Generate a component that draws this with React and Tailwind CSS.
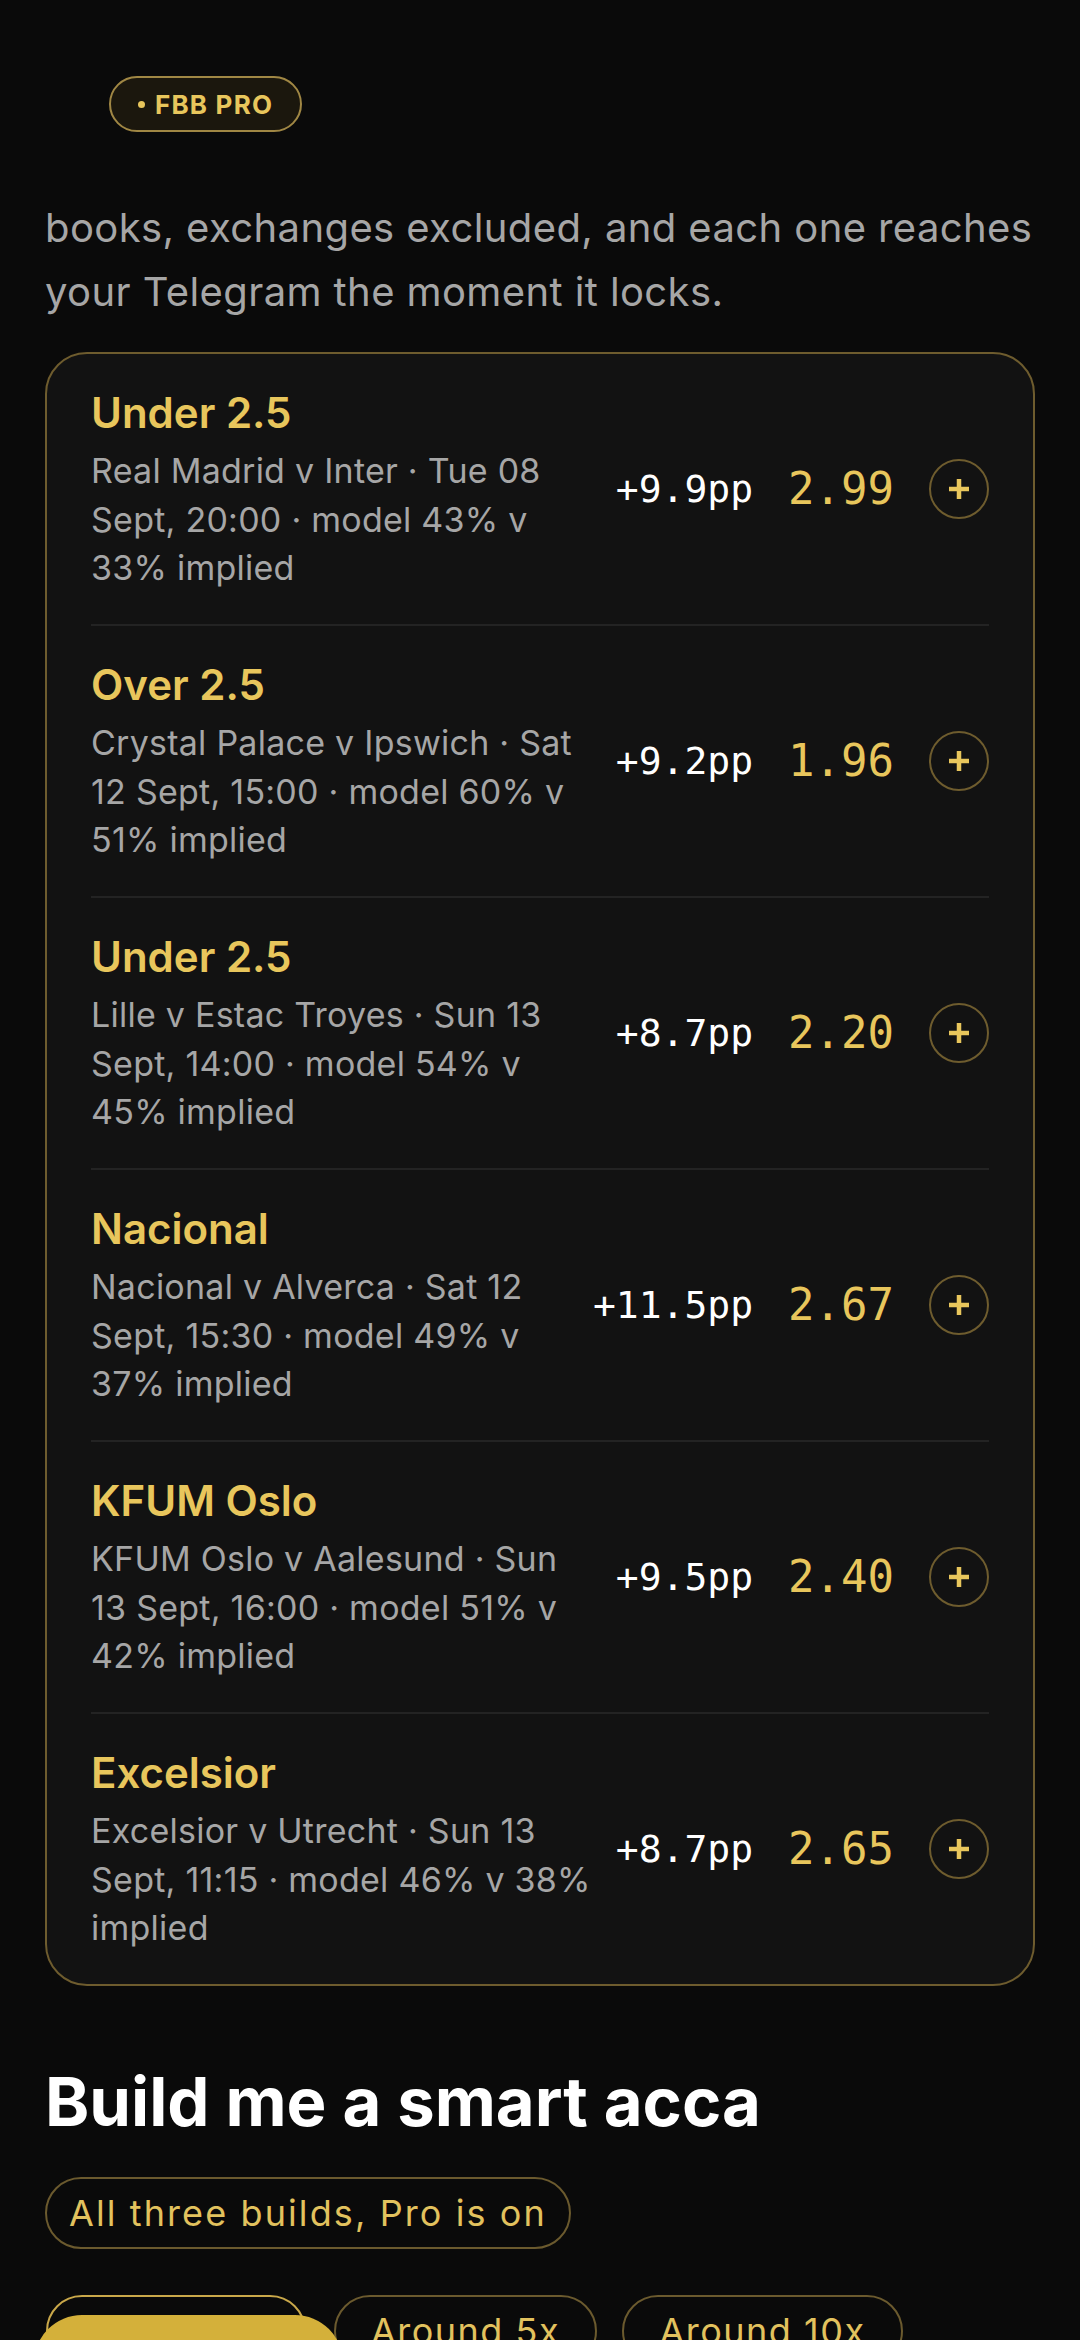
import React from 'react';

const picks = [
  { title: 'Under 2.5', lines: ['Real Madrid v Inter · Tue 08', 'Sept, 20:00 · model 43% v', '33% implied'], edge: '+9.9pp', odds: '2.99' },
  { title: 'Over 2.5', lines: ['Crystal Palace v Ipswich · Sat', '12 Sept, 15:00 · model 60% v', '51% implied'], edge: '+9.2pp', odds: '1.96' },
  { title: 'Under 2.5', lines: ['Lille v Estac Troyes · Sun 13', 'Sept, 14:00 · model 54% v', '45% implied'], edge: '+8.7pp', odds: '2.20' },
  { title: 'Nacional', lines: ['Nacional v Alverca · Sat 12', 'Sept, 15:30 · model 49% v', '37% implied'], edge: '+11.5pp', odds: '2.67' },
  { title: 'KFUM Oslo', lines: ['KFUM Oslo v Aalesund · Sun', '13 Sept, 16:00 · model 51% v', '42% implied'], edge: '+9.5pp', odds: '2.40' },
  { title: 'Excelsior', lines: ['Excelsior v Utrecht · Sun 13', 'Sept, 11:15 · model 46% v 38%', 'implied'], edge: '+8.7pp', odds: '2.65' },
];

const sans = "font-['Inter','Noto_Sans',sans-serif]";
const mono = "font-['DejaVu_Sans_Mono','Liberation_Mono',monospace]";

const PickRow = ({ pick, last }) => (
  <>
    <div className="flex items-center gap-[35px] px-[44px] pt-[32px] pb-[31.5px]">
      <div className="flex-1 min-w-0">
        <div className="text-[42px] leading-[54px] font-semibold text-[#e8c65c]">{pick.title}</div>
        <div className="mt-[7px] text-[34px] leading-[48.5px] text-[#a6a6a6] tracking-[0.25px]">
          {pick.lines.map((l, i) => (
            <div key={i} className="whitespace-nowrap">{l}</div>
          ))}
        </div>
      </div>
      <div className={`${mono} text-[38px] text-white whitespace-nowrap`}>{pick.edge}</div>
      <div className={`${mono} text-[44px] font-medium text-[#e8c65c]`}>{pick.odds}</div>
      <button className="w-[60px] h-[60px] rounded-full border-2 border-[#6e5c2e] flex items-center justify-center shrink-0">
        <svg width="22" height="22" viewBox="0 0 22 22">
          <path d="M11 1v20M1 11h20" stroke="#e8c65c" strokeWidth="4.5" />
        </svg>
      </button>
    </div>
    {!last && <div className="mx-[44px] h-[2px] bg-[#232323]" />}
  </>
);

export default function App() {
  return (
    <div className={`${sans} w-[1080px] h-[2340px] overflow-hidden bg-[#0a0a0a] relative`}>
      <div className="pt-[76px] pl-[109px]">
        <span className="inline-flex items-center gap-[10px] h-[56px] px-[27px] rounded-full border-2 border-[#a08744] bg-[#1b170d] text-[#e8c65c] text-[26px] font-bold tracking-[1.2px]">
          <span className="w-[7px] h-[7px] rounded-full bg-[#e8c65c]" />
          FBB PRO
        </span>
      </div>

      <p className="mt-[64px] px-[45px] text-[40px] leading-[64px] text-[#a6a6a6] tracking-[0.4px]">
        books, exchanges excluded, and each one reaches your Telegram the moment it locks.
      </p>

      <div className="mt-[28px] mx-[45px] rounded-[42px] border-2 border-[#6e5c2e] bg-[#121212]">
        {picks.map((p, i) => (
          <PickRow key={i} pick={p} last={i === picks.length - 1} />
        ))}
      </div>

      <h2 className="mt-[76px] px-[45px] text-[67px] leading-[80px] font-bold text-white">
        Build me a smart acca
      </h2>

      <div className="mt-[35px] px-[45px]">
        <span className="inline-flex items-center h-[72px] px-[22px] rounded-full border-2 border-[#6b5a2e] text-[36px] text-[#e2c25e] tracking-[2.1px]">
          All three builds, Pro is on
        </span>
      </div>

      <div className="mt-[46px] pl-[46px] flex">
        <div className="h-[72px] w-[260px] rounded-full border-2 border-[#c9a84a]" />
        <div className="ml-[28px] h-[72px] w-[263px] rounded-full border-2 border-[#6b5a2e] flex items-center justify-center text-[36px] text-[#e2c25e] tracking-[1.5px] whitespace-nowrap">Around 5x</div>
        <div className="ml-[25px] h-[72px] w-[281px] rounded-full border-2 border-[#6b5a2e] flex items-center justify-center text-[36px] text-[#e2c25e] tracking-[1.5px] whitespace-nowrap">Around 10x</div>
      </div>

      <div className="absolute left-[34px] top-[2315px] w-[309px] h-[80px] rounded-t-[48px] bg-[#d4b03a]" />
    </div>
  );
}
